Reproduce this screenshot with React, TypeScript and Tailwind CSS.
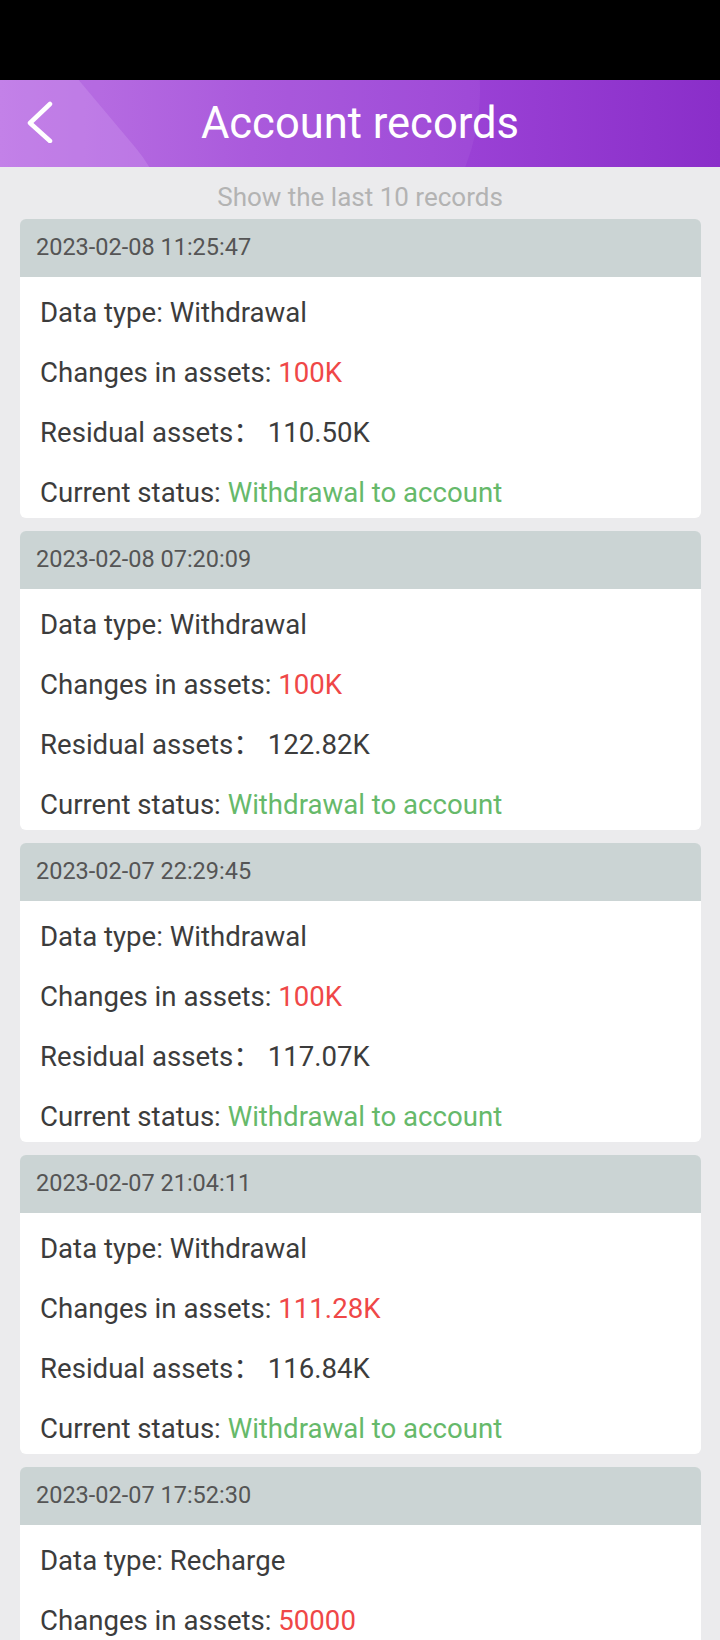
import React from "react";

type Rec = {
  time: string;
  type: string;
  change: string;
  residual: string;
  status: string;
};

const records: Rec[] = [
  { time: "2023-02-08 11:25:47", type: "Withdrawal", change: "100K", residual: "110.50K", status: "Withdrawal to account" },
  { time: "2023-02-08 07:20:09", type: "Withdrawal", change: "100K", residual: "122.82K", status: "Withdrawal to account" },
  { time: "2023-02-07 22:29:45", type: "Withdrawal", change: "100K", residual: "117.07K", status: "Withdrawal to account" },
  { time: "2023-02-07 21:04:11", type: "Withdrawal", change: "111.28K", residual: "116.84K", status: "Withdrawal to account" },
  { time: "2023-02-07 17:52:30", type: "Recharge", change: "50000", residual: "210.50K", status: "Recharge successful" },
];

function Card({ r }: { r: Rec }) {
  return (
    <div className="ml-[20px] mr-[19px] rounded-[6px] overflow-hidden">
      <div className="h-[58px] bg-[#cbd4d4] flex items-center pl-[16px] text-[23.5px] text-[#555555]">
        {r.time}
      </div>
      <div className="bg-white pt-[13px] pb-[2px] pl-[20px] flex flex-col gap-[14px] text-[27.6px] leading-[46px] text-[#3c3c3c]">
        <div>Data type: {r.type}</div>
        <div>
          Changes in assets: <span className="text-[#ef4747]">{r.change}</span>
        </div>
        <div>Residual assets： {r.residual}</div>
        <div>
          Current status: <span className="text-[#66b96a]">{r.status}</span>
        </div>
      </div>
    </div>
  );
}

export default function App() {
  return (
    <div
      className="w-[720px] h-[1640px] overflow-hidden bg-[#ebebed]"
      style={{ fontFamily: 'Roboto, "Noto Sans CJK SC", sans-serif' }}
    >
      <div className="h-[80px] bg-black" />
      <div className="relative h-[87px] overflow-hidden bg-[linear-gradient(90deg,#b86de3_0%,#a652db_35%,#9a41d5_65%,#8a2ec9_100%)]">
        <div className="absolute left-[-200px] top-[-180px] w-[300px] h-[520px] rounded-full rotate-[-40deg] bg-[#cf94ef] opacity-35" />
        <div className="absolute left-[-40px] top-[-200px] w-[520px] h-[420px] rounded-full bg-white opacity-[0.05]" />
        <div className="relative h-full flex items-center justify-center">
          <svg
            className="absolute left-[26px] top-[21px]"
            width="30"
            height="42"
            viewBox="0 0 30 42"
            fill="none"
          >
            <path d="M24 3 L4 22 L24 40" stroke="white" strokeWidth="4.5" strokeLinecap="round" strokeLinejoin="round" />
          </svg>
          <div className="text-white text-[43.5px] leading-none">Account records</div>
        </div>
      </div>
      <div className="pt-[13px] leading-[34px] text-center text-[26px] text-[#b3b3b3]">
        Show the last 10 records
      </div>
      <div className="pt-[5px] flex flex-col gap-[13px]">
        {records.map((r) => (
          <Card key={r.time} r={r} />
        ))}
      </div>
    </div>
  );
}
